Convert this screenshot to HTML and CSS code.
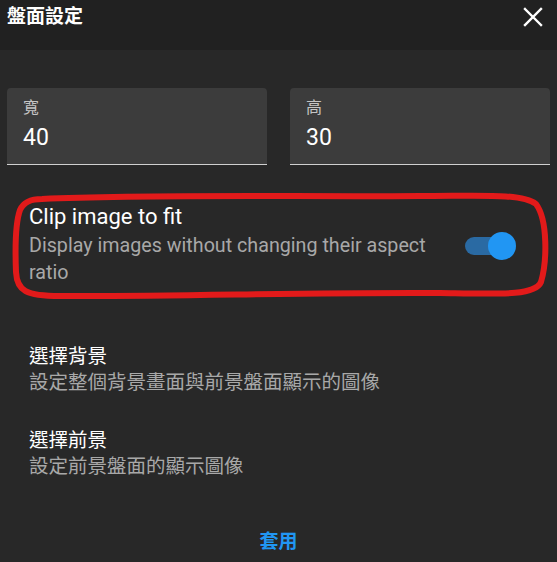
FILE: index.html
```html
<!DOCTYPE html>
<html lang="zh-Hant">
<head>
<meta charset="utf-8">
<link rel="stylesheet" href="styles.css">
</head>
<body>
<div class="dialog">
  <header class="head">
    <h1 class="title">盤面設定</h1>
    <button class="close" aria-label="close">
      <svg width="20" height="20" viewBox="0 0 20 20"><path d="M2 2 L18 18 M18 2 L2 18" stroke="#fff" stroke-width="2.4" stroke-linecap="square"/></svg>
    </button>
  </header>
  <main class="content">
    <div class="fields">
      <div class="field"><span class="flabel">寬</span><span class="fvalue">40</span></div>
      <div class="field"><span class="flabel">高</span><span class="fvalue">30</span></div>
    </div>
    <div class="toggle-row">
      <div class="ttext">
        <div class="ttitle">Clip image to fit</div>
        <div class="tdesc">Display images without changing their aspect ratio</div>
      </div>
      <div class="switch"><span class="track"></span><span class="thumb"></span></div>
    </div>
    <div class="item first">
      <div class="ititle">選擇背景</div>
      <div class="idesc">設定整個背景畫面與前景盤面顯示的圖像</div>
    </div>
    <div class="item">
      <div class="ititle">選擇前景</div>
      <div class="idesc">設定前景盤面的顯示圖像</div>
    </div>
    <div class="actions"><button class="apply">套用</button></div>
  </main>
  <svg class="mark" width="557" height="562" viewBox="0 0 557 562">
    <path d="M42 199 C150 194 300 197 420 196 C480 196 522 193 536 204 C548 220 547 262 541 282 C535 296 500 294 440 293 C320 292 160 297 60 296 C26 296 17 291 16 272 C15 247 15 224 20 210 C24 201 32 199 42 199 Z" fill="none" stroke="#e21a1a" stroke-width="6" stroke-linejoin="round"/>
  </svg>
</div>
</body>
</html>
```
FILE: styles.css
```css
* { box-sizing: border-box; }
html, body { margin: 0; padding: 0; }
body {
  width: 557px;
  height: 562px;
  background: #282828;
  font-family: Roboto, "Noto Sans CJK TC", sans-serif;
  color: #fff;
  overflow: hidden;
}
.dialog { position: relative; width: 557px; height: 562px; }
.head {
  height: 50px;
  background: #212121;
  display: flex;
  align-items: flex-start;
  justify-content: space-between;
  padding: 5px 14px 0 7px;
}
.title {
  margin: 0;
  font-size: 19px;
  font-weight: 700;
  line-height: 24px;
}
.close {
  background: none;
  border: 0;
  padding: 0;
  margin-top: 2px;
  width: 20px;
  height: 20px;
}
.close svg { display: block; }
.content { padding: 38px 7px 0; }
.fields {
  display: grid;
  grid-template-columns: 260px 260px;
  column-gap: 23px;
}
.field {
  height: 77px;
  background: #3c3c3c;
  border-radius: 4px 4px 0 0;
  border-bottom: 1px solid #d0d0d0;
  padding: 9px 16px 0;
  display: flex;
  flex-direction: column;
}
.flabel { font-size: 16px; line-height: 22px; color: #c4c4c4; }
.fvalue { font-size: 23px; line-height: 30px; color: #fff; margin-top: 4px; }
.toggle-row {
  display: flex;
  align-items: center;
  padding: 38px 34px 0 22px;
  gap: 10px;
}
.ttext { flex: 1; }
.ttitle { font-size: 22px; line-height: 28px; color: #fff; }
.tdesc { font-size: 19.7px; line-height: 27px; color: #a8a8a8; margin-top: 1px; }
.switch { position: relative; width: 51px; height: 28px; flex: none; margin-top: 2px; }
.track {
  position: absolute; left: 0; top: 5px;
  width: 40px; height: 18px; border-radius: 9px;
  background: #2a6aa3;
}
.thumb {
  position: absolute; right: 0; top: 0;
  width: 28px; height: 28px; border-radius: 50%;
  background: #2196f3;
}
.item { padding: 0 22px; }
.item.first { margin-top: 58px; }
.item + .item { margin-top: 32px; }
.ititle { font-size: 19.5px; line-height: 26px; color: #fff; }
.idesc { font-size: 19.5px; line-height: 26px; color: #a8a8a8; }
.actions { display: flex; justify-content: center; margin-top: 49px; }
.apply {
  background: none; border: 0; padding: 0;
  font-family: Roboto, "Noto Sans CJK TC", sans-serif;
  font-size: 19px; font-weight: 700; color: #2196f3;
  line-height: 26px;
}
.mark { position: absolute; left: 0; top: 0; pointer-events: none; }
```
